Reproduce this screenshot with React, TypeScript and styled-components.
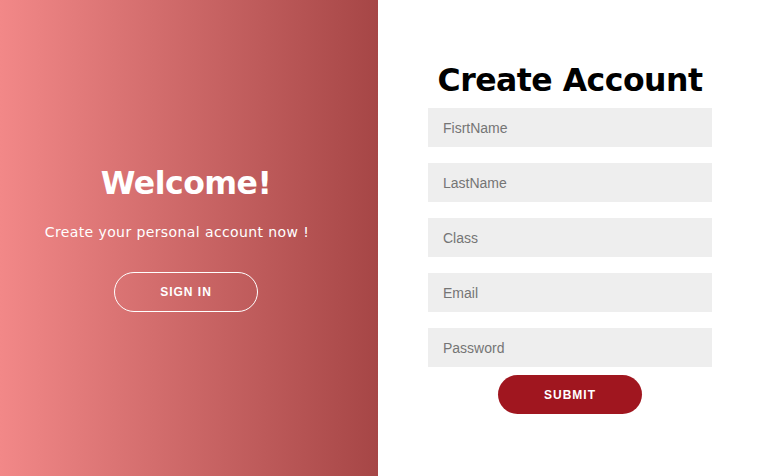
import React from "react";
import styled, { createGlobalStyle } from "styled-components";

const Global = createGlobalStyle`
  html, body { margin: 0; padding: 0; }
  body { font-family: "Liberation Sans", Arial, sans-serif; background: #fff; }
  * { box-sizing: border-box; }
`;

const Page = styled.div`
  display: flex;
  width: 758px;
  height: 476px;
  overflow: hidden;
`;

const Overlay = styled.section`
  width: 378px;
  height: 100%;
  background: linear-gradient(to right, #f28888, #a64646);
  color: #fff;
  display: flex;
  flex-direction: column;
  align-items: center;
  justify-content: center;
  padding-right: 6px;
  padding-bottom: 1px;
`;

const Welcome = styled.h1`
  margin: 0;
  font-family: "DejaVu Sans", sans-serif;
  font-weight: bold;
  font-size: 31.5px;
  line-height: 40px;
  letter-spacing: -0.5px;
`;

const Subtitle = styled.p`
  margin: 19px 0 30px;
  font-family: "DejaVu Sans", sans-serif;
  font-size: 14px;
  line-height: 20px;
  letter-spacing: 0.4px;
  padding-right: 18px;
`;

const Pill = styled.button<{ $variant: "ghost" | "solid" }>`
  width: 144px;
  height: ${(p) => (p.$variant === "ghost" ? "40px" : "39px")};
  border-radius: 20px;
  border: ${(p) => (p.$variant === "ghost" ? "1px solid #fff" : "none")};
  background: ${(p) => (p.$variant === "ghost" ? "transparent" : "#a0161f")};
  color: #fff;
  font-family: "Liberation Sans", Arial, sans-serif;
  font-weight: bold;
  font-size: 12px;
  letter-spacing: 1px;
  text-transform: uppercase;
  cursor: pointer;
`;

const FormPanel = styled.section`
  flex: 1;
  display: flex;
  flex-direction: column;
  align-items: center;
  padding-top: 60px;
  padding-left: 4px;
`;

const Title = styled.h1`
  margin: 0 0 8px;
  font-family: "DejaVu Sans", sans-serif;
  font-weight: bold;
  font-size: 31.5px;
  line-height: 40px;
  color: #000;
  letter-spacing: -0.5px;
`;

const Fields = styled.div`
  display: flex;
  flex-direction: column;
  gap: 16px;
  margin-bottom: 8px;
`;

const Input = styled.input`
  width: 284px;
  height: 39px;
  border: none;
  outline: none;
  background: #eeeeee;
  padding: 0 15px;
  font-family: "Liberation Sans", Arial, sans-serif;
  font-size: 14px;
  color: #333;
  &::placeholder { color: #757575; }
`;

export default function App() {
  return (
    <>
      <Global />
      <Page>
        <Overlay>
          <Welcome>Welcome!</Welcome>
          <Subtitle>Create your personal account now !</Subtitle>
          <Pill $variant="ghost">Sign In</Pill>
        </Overlay>
        <FormPanel>
          <Title>Create Account</Title>
          <Fields>
            <Input placeholder="FisrtName" />
            <Input placeholder="LastName" />
            <Input placeholder="Class" />
            <Input placeholder="Email" />
            <Input type="password" placeholder="Password" />
          </Fields>
          <Pill $variant="solid">Submit</Pill>
        </FormPanel>
      </Page>
    </>
  );
}
